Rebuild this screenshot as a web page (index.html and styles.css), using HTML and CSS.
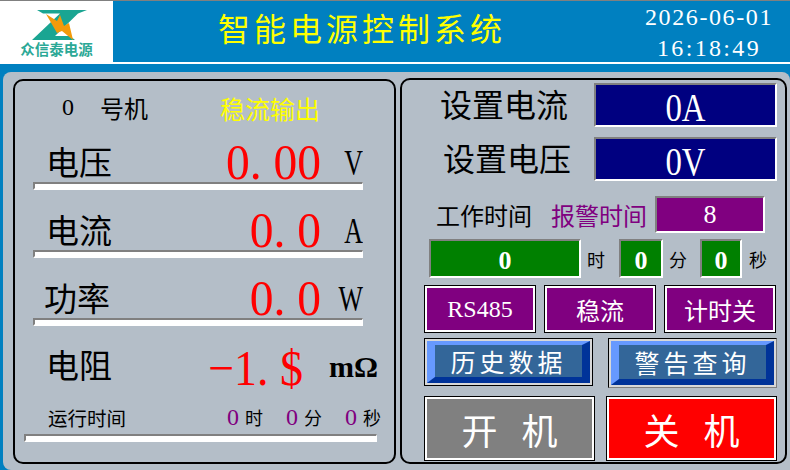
FILE: index.html
```html
<!DOCTYPE html>
<html>
<head>
  <title>智能电源控制系统</title>
  <link rel="stylesheet" href="styles.css">
</head>
<body>
  <header class="top-bar">
    <div class="logo">
      <svg class="logo-mark" width="60" height="31" viewBox="0 0 60 31">
        <polygon points="8,0 58,0 49,3.5 26,26 41,26 46,30 3,30 31,3.5 14,3.5" fill="#1aa592"/>
        <polygon points="17,4 28,11 31,5 35,16 40,13 44,30 33,21 28,23" fill="#f39a0a"/>
      </svg>
      <span class="logo-name">众信泰电源</span>
    </div>
    <h1 class="title">智能电源控制系统</h1>
    <div class="clock">
      <span>2026-06-01</span>
      <span class="time">16:18:49</span>
    </div>
  </header>
  <div class="top-line"></div>

  <main class="board">
    <section class="panel left">
      <div class="machine">
        <span class="machine-no">0</span>
        <span class="machine-name">号机</span>
        <span class="mode">稳流输出</span>
      </div>

      <div class="metric">
        <span class="metric-name">电压</span>
        <span class="metric-value">0. 00</span>
        <span class="metric-unit">V</span>
        <div class="bar"></div>
      </div>
      <div class="metric">
        <span class="metric-name">电流</span>
        <span class="metric-value">0. 0</span>
        <span class="metric-unit">A</span>
        <div class="bar"></div>
      </div>
      <div class="metric">
        <span class="metric-name shifted">功率</span>
        <span class="metric-value">0. 0</span>
        <span class="metric-unit">W</span>
        <div class="bar"></div>
      </div>
      <div class="metric resistance">
        <span class="metric-name">电阻</span>
        <span class="metric-value">−1. $</span>
        <span class="metric-unit ohm">mΩ</span>
      </div>

      <div class="run-time">
        <span class="run-label">运行时间</span>
        <span class="run-num">0</span><span class="run-unit">时</span>
        <span class="run-num">0</span><span class="run-unit">分</span>
        <span class="run-num">0</span><span class="run-unit">秒</span>
      </div>
      <div class="bar wide"></div>
    </section>

    <section class="panel right">
      <div class="setting">
        <span class="setting-name">设置电流</span>
        <div class="field navy"><span>0A</span></div>
      </div>
      <div class="setting second">
        <span class="setting-name">设置电压</span>
        <div class="field navy"><span>0V</span></div>
      </div>

      <div class="times">
        <span class="time-label">工作时间</span>
        <span class="time-label alarm">报警时间</span>
        <div class="field purple">8</div>
      </div>

      <div class="counter">
        <div class="field green hours">0</div><span>时</span>
        <div class="field green mins">0</div><span>分</span>
        <div class="field green secs">0</div><span>秒</span>
      </div>

      <div class="modes">
        <button class="mode-btn">RS485</button>
        <button class="mode-btn">稳流</button>
        <button class="mode-btn">计时关</button>
      </div>

      <div class="links">
        <button class="link-btn"><span>历史数据</span></button>
        <button class="link-btn tall"><span>警告查询</span></button>
      </div>

      <div class="power">
        <button class="power-btn off">开 机</button>
        <button class="power-btn on">关 机</button>
      </div>
    </section>
  </main>
</body>
</html>
```

FILE: styles.css
```css
* {
  box-sizing: border-box;
}

html, body {
  margin: 0;
  padding: 0;
}

body {
  width: 790px;
  height: 470px;
  overflow: hidden;
  background-color: #0080c0;
  font-family: "Liberation Serif", "Noto Sans CJK SC", serif;
  color: #000;
}

/* header */
.top-bar {
  display: flex;
  height: 62px;
  border-top: 1px solid #808080;
}

.logo {
  display: flex;
  flex-direction: column;
  align-items: center;
  width: 113px;
  height: 61px;
  padding-top: 9px;
  background-color: #fff;
}

.logo-mark {
  display: block;
  margin-left: 5px;
}

.logo-name {
  font-family: "Noto Sans CJK SC", sans-serif;
  font-size: 14.5px;
  line-height: 15px;
  font-weight: bold;
  color: #2ba896;
}

.title {
  margin: 0 0 0 105px;
  font-size: 32px;
  line-height: 58px;
  font-weight: normal;
  letter-spacing: 4px;
  color: #ffff00;
}

.clock {
  display: flex;
  flex-direction: column;
  align-items: center;
  width: 130px;
  margin-left: 138px;
  padding-top: 1px;
  font-size: 24px;
  line-height: 31px;
  letter-spacing: 1.6px;
  color: #fff;
}

.time {
  letter-spacing: 2.35px;
}

.top-line {
  height: 2px;
  background-color: #fff;
}

/* panels */
.board {
  display: flex;
  gap: 4px;
  height: 398px;
  margin: 8px 0 0 3px;
  padding: 6px 3px 6px 10px;
  border-radius: 8px 8px 0 8px;
  background-color: #b4bec8;
}

.panel {
  border: 2px solid #000;
  border-radius: 10px;
}

.left {
  width: 383px;
  margin-top: 1px;
  padding-left: 9px;
}

.right {
  width: 387px;
  padding: 3px 8px 0 22px;
}

.machine {
  display: flex;
  align-items: center;
  height: 48px;
  padding-top: 5px;
  font-size: 24px;
}

.machine-no {
  width: 38px;
  margin-left: 38px;
}

.machine-name {
  width: 120px;
}

.mode {
  font-size: 25px;
  color: #ffff00;
}

.metric {
  display: grid;
  grid-template-columns: 100px 188px 42px;
  grid-template-rows: 53px 8px;
  align-items: center;
  width: 330px;
  height: 68px;
  margin-left: 9px;
}

.metric-name {
  margin-left: 13px;
  padding-top: 16px;
  font-size: 33px;
  line-height: 40px;
  white-space: nowrap;
}

.metric-name.shifted {
  margin-left: 11px;
}

.metric-value {
  padding-top: 13px;
  font-size: 50px;
  line-height: 52px;
  color: #ff0000;
  text-align: right;
  white-space: nowrap;
  transform: scaleX(0.95);
  transform-origin: right center;
}

.metric-unit {
  padding-top: 15px;
  font-size: 36px;
  line-height: 40px;
  text-align: right;
  transform: scaleX(0.72);
  transform-origin: right center;
}

.ohm {
  padding-top: 4px;
  margin-right: -15px;
  font-size: 30px;
  font-weight: bold;
  white-space: nowrap;
  transform: none;
}

.resistance .metric-name {
  padding-top: 3px;
}

.resistance .metric-value {
  margin-right: 18px;
  padding-top: 5px;
  transform: scaleX(0.92);
}

.bar {
  grid-column: 1 / 4;
  height: 8px;
  border-style: solid;
  border-width: 2px 1px 2px 2px;
  border-color: #808080 #fff #fff #808080;
  background-color: #fff;
}

.resistance {
  height: 64px;
  grid-template-rows: 64px;
}

.bar.wide {
  width: 353px;
  margin-top: 3px;
}

.run-time {
  display: flex;
  align-items: center;
  height: 28px;
  margin-top: 6px;
  font-size: 18px;
}

.run-label {
  flex: none;
  width: 179px;
  margin-left: 24px;
  font-size: 19.5px;
}

.run-num {
  flex: none;
  width: 12px;
  margin-right: 6px;
  color: #800080;
  font-size: 24px;
  text-align: center;
}

.run-unit {
  flex: none;
  width: 41px;
}

/* right side */
.setting {
  display: flex;
  align-items: center;
  justify-content: space-between;
  height: 44px;
}

.setting.second {
  margin-top: 10px;
}

.setting-name {
  margin: -4px 0 0 16px;
  font-size: 32px;
}

.second .setting-name {
  margin-left: 19px;
}

.field {
  display: flex;
  align-items: center;
  justify-content: center;
  border-style: solid;
  border-width: 2px;
  border-color: #808080 #fff #fff #808080;
  color: #fff;
}

.navy {
  width: 183px;
  height: 44px;
  padding-top: 4px;
  background-color: #000080;
  font-size: 40px;
}

.navy span {
  transform: scaleX(0.82);
}

.purple {
  width: 110px;
  height: 37px;
  margin-left: 8px;
  background-color: #800080;
  font-size: 26px;
}

.green {
  height: 39px;
  padding-top: 5px;
  background-color: #008000;
  font-size: 26px;
  font-weight: bold;
}

.times {
  display: flex;
  align-items: center;
  height: 37px;
  margin-top: 15px;
  font-size: 24px;
}

.time-label {
  margin-left: 12px;
}

.alarm {
  margin-left: 19px;
  color: #800080;
}

.counter {
  display: flex;
  align-items: center;
  margin-top: 6px;
  margin-left: 5px;
  font-size: 18px;
}

.hours {
  width: 152px;
  margin-right: 6px;
}

.mins {
  width: 44px;
  margin: 0 6px 0 14px;
}

.secs {
  width: 42px;
  margin: 0 7px 0 13px;
}

.modes {
  display: flex;
  gap: 8px;
  margin-top: 7px;
}

button {
  padding: 0;
  font-family: inherit;
  color: #fff;
  cursor: pointer;
}

.mode-btn {
  width: 112px;
  height: 48px;
  border: 3px solid #fff;
  outline: 1px solid #000;
  outline-offset: -1px;
  background-color: #800080;
  font-size: 24px;
}

.links {
  display: flex;
  justify-content: space-between;
  align-items: flex-start;
  width: 353px;
  margin-top: 5px;
}

.link-btn {
  width: 169px;
  height: 48px;
  padding: 2px;
  border: 1px solid #000;
  background-color: #d8d8d8;
}

.link-btn.tall {
  height: 50px;
  border-color: #000 #808080 #808080 #000;
}

.link-btn span {
  display: flex;
  align-items: center;
  justify-content: center;
  height: 100%;
  border-style: solid;
  border-width: 4px 8px 6px 8px;
  border-color: #6699ff #003399 #003399 #6699ff;
  background-color: #336699;
  font-size: 25px;
  letter-spacing: 4px;
}

.power {
  display: flex;
  justify-content: space-between;
  width: 353px;
  margin-top: 8px;
}

.power-btn {
  width: 171px;
  height: 65px;
  border: 3px solid #fff;
  outline: 1px solid #000;
  outline-offset: -1px;
  font-size: 36px;
  word-spacing: 15px;
}

.off {
  background-color: #808080;
}

.on {
  background-color: #ff0000;
}
```
